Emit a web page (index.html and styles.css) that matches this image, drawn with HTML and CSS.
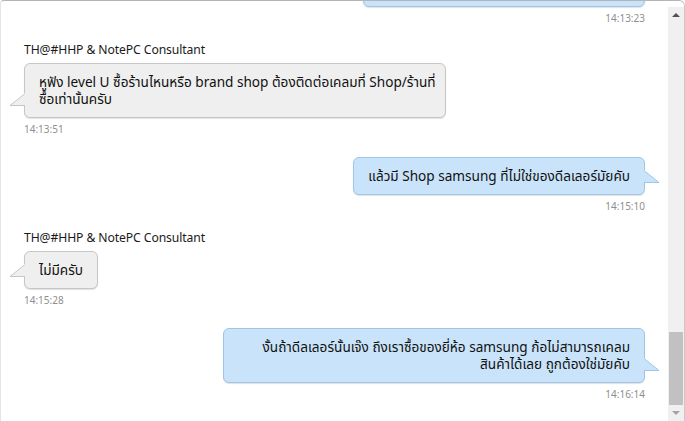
FILE: index.html
```html
<!DOCTYPE html>
<html>
<head>
<meta charset="utf-8">
<link rel="stylesheet" href="styles.css">
</head>
<body>
<div class="frame">
  <div class="chat">
    <div class="msg out first">
      <div class="bubble blue"><div class="text">&nbsp;</div></div>
      <div class="time">14:13:23</div>
    </div>

    <div class="msg in">
      <div class="name">TH@#HHP &amp; NotePC Consultant</div>
      <div class="bubble gray wide">
        <div class="text">หูฟัง level U ซื้อร้านไหนหรือ brand shop ต้องติดต่อเคลมที่ Shop/ร้านที่<br>ซื้อเท่านั้นครับ</div>
        <svg class="tail tail-left" width="16" height="14" viewBox="0 0 16 14"><path d="M16 0.5 L1 12.5 L16 12.5" fill="#efefef" stroke="#c6c6c6" stroke-width="1"/><rect x="15.5" y="0" width="2" height="12" fill="#efefef"/></svg>
      </div>
      <div class="time">14:13:51</div>
    </div>

    <div class="msg out">
      <div class="bubble blue">
        <div class="text">แล้วมี Shop samsung ที่ไม่ใช่ของดีลเลอร์มัยคับ</div>
        <svg class="tail tail-right" width="16" height="14" viewBox="0 0 16 14"><path d="M0 0.5 L15 12.5 L0 12.5" fill="#c9e4fa" stroke="#9fc6e6" stroke-width="1"/><rect x="-1.5" y="0" width="2" height="12" fill="#c9e4fa"/></svg>
      </div>
      <div class="time">14:15:10</div>
    </div>

    <div class="msg in">
      <div class="name">TH@#HHP &amp; NotePC Consultant</div>
      <div class="bubble gray">
        <div class="text">ไม่มีครับ</div>
        <svg class="tail tail-left" width="16" height="14" viewBox="0 0 16 14"><path d="M16 0.5 L1 12.5 L16 12.5" fill="#efefef" stroke="#c6c6c6" stroke-width="1"/><rect x="15.5" y="0" width="2" height="12" fill="#efefef"/></svg>
      </div>
      <div class="time">14:15:28</div>
    </div>

    <div class="msg out">
      <div class="bubble blue wide right">
        <div class="text">งั้นถ้าดีลเลอร์นั้นเจ๊ง ถึงเราซื้อของยี่ห้อ samsung ก้อไม่สามารถเคลม<br>สินค้าได้เลย ถูกต้องใช่มัยคับ</div>
        <svg class="tail tail-right" width="16" height="14" viewBox="0 0 16 14"><path d="M0 0.5 L15 12.5 L0 12.5" fill="#c9e4fa" stroke="#9fc6e6" stroke-width="1"/><rect x="-1.5" y="0" width="2" height="12" fill="#c9e4fa"/></svg>
      </div>
      <div class="time">14:16:14</div>
    </div>
  </div>

  <div class="scrollbar">
    <div class="arrow up"></div>
    <div class="track"><div class="thumb"></div></div>
    <div class="arrow down"></div>
  </div>
</div>
</body>
</html>
```

FILE: styles.css
```css
* { box-sizing: border-box; }
html, body { margin: 0; padding: 0; background: #fff; }
body {
  width: 685px;
  height: 421px;
  overflow: hidden;
  font-family: "Noto Sans", "Noto Sans Thai", "Liberation Sans", sans-serif;
}
.frame {
  display: flex;
  height: 421px;
  border-top: 1px solid #b5b5b5;
  border-right: 1px solid #c8c8c8;
  border-left: 1px solid #e4e4e4;
  border-radius: 4px 6px 0 0;
  overflow: hidden;
}
.chat {
  flex: 1;
  display: flex;
  flex-direction: column;
  padding: 0 23px 0 23px;
  overflow: hidden;
}
.msg { display: flex; flex-direction: column; }
.msg.in { align-items: flex-start; }
.msg.out { align-items: flex-end; margin-top: 22px; }
.msg.out.first { margin-top: -39px; }
.msg.first .bubble { width: 282px; height: 45px; }

.name {
  font-size: 12.2px;
  color: #1a1a1a;
  margin-top: 18px;
  height: 15px;
  line-height: 15px;
  letter-spacing: -0.1px;
}

.bubble {
  position: relative;
  border-radius: 6px;
  padding: 9px 14px 10px;
  font-size: 13.6px;
  line-height: 17px;
  color: #111;
  margin-top: 6px;
}
.msg.out .bubble { margin-top: 0; }
.bubble.gray {
  background: #efefef;
  border: 1px solid #c6c6c6;
  box-shadow: 0 1px 1px rgba(0,0,0,0.12);
}
.bubble.blue {
  background: #c9e4fa;
  border: 1px solid #9fc6e6;
  box-shadow: 0 1px 1px rgba(0,0,0,0.12);
}
.bubble.wide { width: 422px; }
.bubble.right .text { text-align: right; }
.text { white-space: nowrap; }

.tail { position: absolute; bottom: 10px; }
.tail-left { left: -16px; }
.tail-right { right: -16px; }

.time {
  font-size: 10px;
  color: #8f8f8f;
  margin-top: 5px;
  height: 12px;
  line-height: 12px;
}

.scrollbar {
  width: 16px;
  display: flex;
  flex-direction: column;
  margin-top: 6px;
  background: #f0f0f0;
}
.arrow {
  height: 16px;
  display: flex;
  align-items: center;
  justify-content: center;
}
.arrow.up::before {
  content: "";
  border-left: 4px solid transparent;
  border-right: 4px solid transparent;
  border-bottom: 4px solid #505050;
}
.arrow.down::before {
  content: "";
  border-left: 4px solid transparent;
  border-right: 4px solid transparent;
  border-top: 4px solid #a3a3a3;
}
.track {
  flex: 1;
  display: flex;
  flex-direction: column;
  justify-content: flex-end;
  padding: 0 1px;
}
.thumb {
  height: 73px;
  background: #c1c1c1;
}
```
